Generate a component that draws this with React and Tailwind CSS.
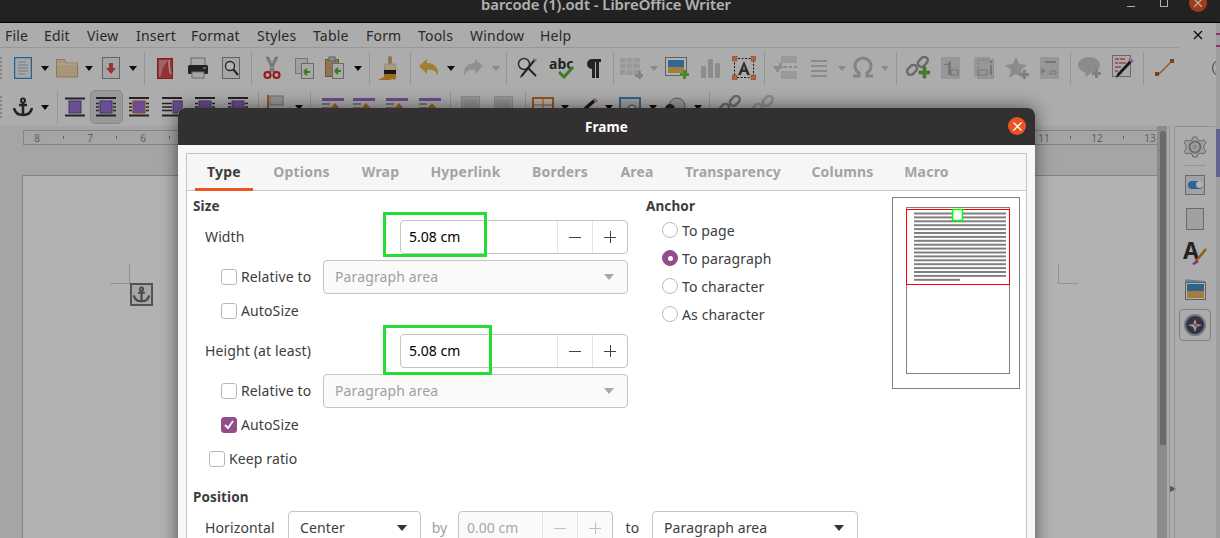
import React from "react";

const FONT = "font-['Noto_Sans','Liberation_Sans',sans-serif]";

const C = ({ w, children }) => (
  <div className={`${w} h-full flex items-center justify-center shrink-0`}>{children}</div>
);
const Sep = ({ w }) => (
  <div className={`${w} h-full flex items-center justify-center shrink-0`}>
    <div className="w-px h-[33px] bg-[#d6d6d6]" />
  </div>
);
const D = ({ w, off }) => (
  <div className={`${w} h-full flex items-center justify-center shrink-0`}>
    <svg width="8" height="5"><path d="M0 0h8L4 5z" fill={off ? "#c4c4c4" : "#111"} /></svg>
  </div>
);
const S = ({ w = 24, h = 24, children }) => <svg width={w} height={h} viewBox={`0 0 ${w} ${h}`} fill="none">{children}</svg>;

const NewDoc = () => (<S w={18} h={22}><rect x=".5" y=".5" width="17" height="21" fill="#eaf2f8" stroke="#3f8cc4" strokeWidth="1.5"/><path d="M4 5h8M4 8h10M4 11h10M4 14h10M4 17h7" stroke="#9fb0bc"/></S>);
const Folder = () => (<S w={22} h={20}><path d="M.5 5V1.5h8l2 3.5h11v14H.5z" fill="#f0d9ae" stroke="#c9ab7b"/><path d="M1 6h20" stroke="#fff2d5"/></S>);
const Save = () => (<S w={18} h={22}><rect x=".5" y=".5" width="17" height="21" fill="#ececec" stroke="#8f8f8f"/><path d="M7 6h4v5h3l-5 6-5-6h3z" fill="#e04848" /></S>);
const Pdf = () => (<S w={16} h={21}><rect x=".5" y=".5" width="15" height="20" fill="#d4484c" stroke="#a83034"/><path d="M12 2C7 6 5 11 4 18l-2 1V2z" fill="#e98e8e"/><path d="M12 2c0 5 0 10 2 14" stroke="#f3c5c5" strokeWidth="1.600"/></S>);
const Printer = () => (<S w={22} h={22}><rect x="4" y="1" width="14" height="8" fill="#f2f2f2" stroke="#999"/><rect x="1" y="8" width="20" height="9" rx="1.5" fill="#333"/><rect x="16" y="10" width="3" height="2" fill="#35a8e0"/><rect x="5" y="15" width="12" height="6" fill="#eee" stroke="#999"/></S>);
const Preview = () => (<S w={18} h={22}><rect x=".5" y=".5" width="17" height="21" fill="#ececec" stroke="#8f8f8f"/><circle cx="8" cy="9" r="4.5" fill="#fff" stroke="#333" strokeWidth="1.3"/><path d="M11 12l5 6" stroke="#333" strokeWidth="2"/></S>);
const Cut = () => (<S w={18} h={24}><path d="M3 1l1 2 6 13h2L6 1zM15 1l-1 2-6 13H6l6-15z" fill="#b4b4b4" stroke="#8a8a8a" strokeWidth=".5"/><circle cx="4.5" cy="19" r="3" stroke="#d22" strokeWidth="2.2"/><circle cx="13.5" cy="19" r="3" stroke="#d22" strokeWidth="2.2"/></S>);
const Copy = () => (<S w={20} h={22}><rect x=".5" y="1.5" width="12" height="15" fill="#e6e6e6" stroke="#aaa"/><rect x="6.5" y="6.5" width="12" height="15" fill="#f3f3f3" stroke="#999"/><path d="M15 15H9m0 0l3-3m-3 3l3 3" stroke="#5cad2e" strokeWidth="2.2"/></S>);
const Paste = () => (<S w={20} h={24}><rect x=".5" y="3.5" width="13" height="17" fill="#d0a870" stroke="#a27c48"/><rect x="4" y="1" width="6" height="4" fill="#ccc" stroke="#888"/><rect x="7.5" y="7.5" width="11" height="15" fill="#f3f3f3" stroke="#999"/><path d="M16 15h-6m0 0l3-3m-3 3l3 3" stroke="#5cad2e" strokeWidth="2.2"/></S>);
const Brush = () => (<S w={22} h={25}><rect x="11" y="0" width="4" height="8" rx="2" fill="#cfa873"/><path d="M8 8h10l1 6H7z" fill="#efe2bb" stroke="#b89c66" strokeWidth=".5"/><rect x="7" y="14" width="12" height="4" fill="#222"/><path d="M7 18h12v3l-1 3-3-1-2 1H1l4-2 2-1z" fill="#e29a2f"/></S>);
const Undo = ({ c = "#e8b84a" }) => (<S w={22} h={20}><path d="M1 8l8-7v4c7 0 12 4 11 13-2-5-5-7-11-6v4z" fill={c}/></S>);
const Find = () => (<S w={24} h={24}><circle cx="8" cy="8" r="5.5" fill="#fff" stroke="#444" strokeWidth="1.5"/><path d="M12 12l8 8" stroke="#333" strokeWidth="2"/><path d="M20 4L7 20l-3 2 1-3L18 3z" fill="#333"/><path d="M18 2l3 2-1 2-3-2z" fill="#d68ac8"/></S>);
const Abc = () => (<div className="relative w-[24px] h-[24px] leading-none"><span className="absolute left-0 top-[1px] font-['Noto_Sans'] font-bold text-[14px] text-[#333]">abc</span><svg className="absolute left-[9px] top-[9px]" width="16" height="14"><path d="M1 7l5 5 9-10" stroke="#56b13a" strokeWidth="3" fill="none"/></svg></div>);
const Pilcrow = () => (<S w={16} h={20}><path d="M6 1h9v3h-2v16h-3V4H9v16H6v-9a5 5 0 010-10z" fill="#333"/></S>);
const Table = () => (<S w={24} h={22}><rect x="1" y="1" width="20" height="17" fill="#dcdcdc"/><path d="M1 6h20M1 12h20M7 1v17M14 1v17" stroke="#f5f5f5"/><path d="M16 17h3v-3h3v3h2v3h-2v2h-3v-2h-3z" fill="#bcbcbc"/></S>);
const Image = () => (<S w={24} h={22}><rect x=".5" y=".5" width="21" height="18" fill="#fff" stroke="#8a8a8a"/><rect x="3" y="3" width="16" height="13" fill="#4596d4"/><path d="M3 10h16v6H3z" fill="#e9b458"/><path d="M15 16h3v-3h3v3h3v3h-3v3h-3v-3h-3z" fill="#6cc43c"/></S>);
const Chart = () => (<S w={20} h={20}><rect x="0" y="8" width="5" height="12" rx="1.5" fill="#c9c9c9"/><rect x="7" y="1" width="5" height="19" rx="1.5" fill="#c9c9c9"/><rect x="14" y="5" width="5" height="15" rx="1.5" fill="#c9c9c9"/></S>);
const TextBox = () => (<S w={24} h={24}><rect x="2.5" y="2.5" width="19" height="19" stroke="#222" strokeDasharray="2 1.5"/><path d="M12 5l6 14h-3l-1-3H10l-1 3H6zM11 13.500h2l-1-3.500z" fill="#444" fillRule="evenodd"/>{[[0,0],[19,0],[0,19],[19,19]].map(([x,y],i)=><rect key={i} x={x} y={y} width="5" height="5" fill="#ec9660" stroke="#b86a32" strokeWidth=".5"/>)}</S>);
const Rows = () => (<S w={24} h={24}><rect x="7" y="0" width="16" height="7" fill="#dcdcdc"/><rect x="7" y="15" width="16" height="8" fill="#dcdcdc"/><path d="M0 10h5v-3h3v3h0v3H5v3H2v-3H0z" fill="#c8c8c8"/><path d="M9 11h4M15 11h3M20 11h3" stroke="#c4c4c4" strokeWidth="2"/></S>);
const Align = () => (<S w={18} h={20}><path d="M1 3h16M1 8h16M1 13h16M1 18h16" stroke="#c8c8c8" strokeWidth="2"/></S>);
const Omega = () => (<S w={22} h={24}><path d="M1 20h6v-3c-3-2-4-4-4-7 0-5 4-8 8-8s8 3 8 8c0 3-1 5-4 7v3h6" stroke="#bcbcbc" strokeWidth="3"/></S>);
const Link = ({ plus = true, c = "#999" }) => (<S w={24} h={24}><rect x="11" y="1" width="11" height="7" rx="3.500" transform="rotate(-45 14 8) translate(1 4)" stroke={c} strokeWidth="2.500"/><rect x="2" y="11" width="11" height="7" rx="3.500" transform="rotate(-45 6 16)" stroke={c} strokeWidth="2.500"/>{plus && <path d="M13 15h4v-4h3v4h4v3h-4v4h-3v-4h-4z" fill="#6cb33c" stroke="#4c8a28" strokeWidth=".5"/>}</S>);
const FootGlyph = () => (<path d="M3 7h3l3-3v0h1v14H7V8H3z" fill="#aaa"/>);
const Foot = () => (<S w={20} h={22}><rect x="0" y="0" width="19" height="22" fill="#d8d8d8"/><FootGlyph /><rect x="10" y="13" width="7" height="5" fill="#d8d8d8" stroke="#aaa"/></S>);
const DocBox = () => (<S w={20} h={22}><rect x=".5" y=".5" width="18" height="21" fill="#d8d8d8" stroke="#c4c4c4"/><path d="M3 5h13M3 8h13M3 11h13M3 14h13" stroke="#bcbcbc"/></S>);
const Foot2 = () => (<S w={20} h={22}><rect x="0" y="0" width="16" height="20" fill="#d8d8d8"/><rect x="4" y="3" width="16" height="19" fill="#d8d8d8" stroke="#c0c0c0"/><rect x="4" y="13" width="9" height="5" stroke="#aaa"/><rect x="16" y="4" width="2" height="2" fill="#aaa"/><rect x="16" y="8" width="2" height="10" fill="#aaa"/></S>);
const Star = () => (<S w={24} h={24}><path d="M11 1l3 7 8 1-6 5 2 8-7-4-7 4 2-8-6-5 8-1z" fill="#c8c8c8"/><path d="M15 17h3v-3h3v3h3v3h-3v3h-3v-3h-3z" fill="#b8b8b8"/></S>);
const XRef = () => (<S w={20} h={22}><rect x="0" y="0" width="19" height="22" fill="#d8d8d8"/><path d="M5 5h11" stroke="#aaa" strokeWidth="2"/><path d="M1 11l5 3-5 3z" fill="#b0b0b0"/><rect x="10" y="14" width="6" height="3" stroke="#aaa"/></S>);
const Comment = () => (<S w={24} h={22}><ellipse cx="11" cy="8" rx="11" ry="8" fill="#c8c8c8"/><path d="M7 14l1 6 6-5z" fill="#c8c8c8"/><path d="M14 15h3v-3h3v3h3v3h-3v3h-3v-3h-3z" fill="#b8b8b8"/></S>);
const Track = () => (<S w={24} h={26}><rect x=".5" y=".5" width="18" height="21" fill="#f2f2f2" stroke="#999"/><path d="M3 4h4M8 4h5M3 8h3M7 8h7M3 12h6M3 16h3" stroke="#b62020" strokeWidth="1.2"/><path d="M21 6L8 20l-4 3 1-4L18 5z" fill="#222"/><path d="M18 3l4 3-2 2-4-3z" fill="#dc8fd6"/></S>);
const Line = () => (<S w={20} h={20}><path d="M3 17L17 3" stroke="#d3741f" strokeWidth="1.2"/><rect x="0" y="14" width="4" height="4" fill="#bf5c10"/><rect x="15" y="1" width="4" height="4" fill="#bf5c10"/></S>);
const More = () => (<S w={18} h={18}><circle cx="9" cy="9" r="7.500" stroke="#7c7c7c" strokeWidth="1.200"/><path d="M5 5l4 4-4 4M9 5l4 4-4 4" stroke="#8a8a8a" strokeWidth="1.400"/></S>);

const Anchor = ({ c = "#333", s = 20 }) => (<svg width={s} height={s} viewBox="0 0 20 20" fill="none"><circle cx="10" cy="3.500" r="2" stroke={c} strokeWidth="2"/><path d="M10 5v13M6 8h8" stroke={c} strokeWidth="2.500"/><path d="M1 11c1 5 5 7 9 7s8-2 9-7" stroke={c} strokeWidth="2.500"/></svg>);
const Wrap = ({ kind = 0, border }) => (
  <S w={22} h={20}>
    {kind === 0 ? (<><path d="M1 1.500h20M1 18.500h20" stroke="#333" strokeWidth="2"/></>) : (<><path d="M1 1h20M1 4h0M1 18.500h20" stroke="#333" strokeWidth="2"/>{kind===1 && <path d="M1 6.500h3M1 10h3M1 13.500h3M18 6.500h3M18 10h3M18 13.500h3" stroke="#333" strokeWidth="1.500"/>}{kind===2 && <path d="M1 6.500h10M1 10h10M1 13.500h10" stroke="#333" strokeWidth="1.500"/>}</>)}
    <rect x={kind===2?12:5} y="4" width="12" height="12" fill="#9a6fd0" stroke={border ? "#d0602c" : "#6a45a0"} strokeWidth="1"/>
  </S>
);
const Flag = () => (<S w={22} h={26}><rect x="2" y="1" width="2" height="24" fill="#d97a20"/><rect x="5" y="2" width="13" height="9" fill="#d8d8d8" stroke="#999"/></S>);
const ParaUp = () => (<S w={24} h={20}><rect x="1" y="1" width="22" height="3" fill="#9a6fd0"/><path d="M1 7h8M1 11h8" stroke="#aaa" strokeWidth="2"/><path d="M14 6l6 7H8z" fill="#e0883c"/></S>);
const OrangeFrame = () => (<S w={22} h={20}><rect x="1" y="1" width="20" height="18" fill="#fff" stroke="#d97a20" strokeWidth="2"/><path d="M11 1v18M1 8h20" stroke="#d97a20" strokeWidth="1"/></S>);
const PenSmall = () => (<S w={24} h={20}><path d="M20 3L3 18" stroke="#222" strokeWidth="3.500"/><path d="M19 2l3 3" stroke="#dc8fd6" strokeWidth="3"/></S>);
const BlueFrame = () => (<S w={22} h={20}><rect x="1" y="1" width="20" height="18" fill="#e6e6e6" stroke="#4a8fc4" strokeWidth="2"/><circle cx="13" cy="12" r="4" fill="#fff" stroke="#555"/></S>);
const Reel = () => (<S w={22} h={20}><circle cx="13" cy="9" r="8" fill="#d8d8d8" stroke="#888"/><circle cx="6" cy="12" r="5" fill="#333"/></S>);

function Grip({ h = "h-[24px]" }) {
  return <div className={`w-[2px] ${h} mt-[1px] bg-[repeating-linear-gradient(to_bottom,#bdbdbd_0,#bdbdbd_2px,transparent_2px,transparent_4px)] shrink-0`} />;
}

function Toolbar1() {
  return (
    <div className="h-[40px] flex items-center shrink-0">
      <Grip />
      <div className="w-[6px] shrink-0" />
      <C w="w-[30px]"><NewDoc /></C><D w="w-[14px]" />
      <C w="w-[30px]"><Folder /></C><D w="w-[14px]" />
      <C w="w-[30px]"><Save /></C><D w="w-[14px]" />
      <Sep w="w-[9px]" />
      <C w="w-[32px]"><Pdf /></C><C w="w-[34px]"><Printer /></C><C w="w-[32px]"><Preview /></C>
      <Sep w="w-[8px]" />
      <C w="w-[34px]"><Cut /></C><C w="w-[32px]"><Copy /></C><C w="w-[28px]"><Paste /></C><D w="w-[18px]" />
      <Sep w="w-[4px]" />
      <C w="w-[34px]"><Brush /></C>
      <Sep w="w-[10px]" />
      <C w="w-[28px]"><Undo /></C><D w="w-[16px]" />
      <C w="w-[28px]"><div className="-scale-x-100 flex"><Undo c="#cfcfcf" /></div></C><D w="w-[18px]" off />
      <Sep w="w-[2px]" />
      <C w="w-[42px]"><Find /></C><C w="w-[24px]"><Abc /></C><div className="w-[5px] shrink-0" /><C w="w-[32px]"><Pilcrow /></C>
      <Sep w="w-[6px]" />
      <C w="w-[30px]"><Table /></C><D w="w-[16px]" off />
      <C w="w-[30px]"><Image /></C><C w="w-[38px]"><Chart /></C><C w="w-[28px]"><TextBox /></C>
      <Sep w="w-[12px]" />
      <C w="w-[32px]"><Rows /></C><C w="w-[36px]"><div className="-ml-[2px] flex"><Align /></div></C><D w="w-[8px]" off />
      <div className="w-[2px] shrink-0" />
      <C w="w-[30px]"><Omega /></C><D w="w-[14px]" off />
      <Sep w="w-[8px]" />
      <C w="w-[36px]"><Link /></C><C w="w-[30px]"><Foot /></C><C w="w-[36px]"><Foot2 /></C><C w="w-[30px]"><Star /></C><C w="w-[36px]"><XRef /></C>
      <Sep w="w-[4px]" />
      <C w="w-[36px]"><Comment /></C><C w="w-[32px]"><Track /></C>
      <Sep w="w-[6px]" />
      <C w="w-[38px]"><Line /></C>
      <div className="w-[27px] shrink-0" />
      <C w="w-[18px]"><More /></C>
    </div>
  );
}

function Toolbar2() {
  return (
    <div className="h-[38px] flex items-center shrink-0">
      <Grip />
      <div className="w-[6px] shrink-0" />
      <C w="w-[30px]"><Anchor /></C><D w="w-[14px]" />
      <Sep w="w-[10px]" />
      <C w="w-[26px]"><Wrap /></C>
      <C w="w-[36px]"><div className="w-[33px] h-[34px] rounded-[5px] bg-[#dcdcdc] border border-[#c4c4c4] flex items-center justify-center"><Wrap kind={1} /></div></C>
      <C w="w-[30px]"><Wrap kind={1} border /></C>
      <C w="w-[36px]"><Wrap kind={2} /></C>
      <C w="w-[30px]"><Wrap kind={1} /></C>
      <C w="w-[36px]"><Wrap kind={1} /></C>
      <Sep w="w-[4px]" />
      <C w="w-[32px]"><Flag /></C><D w="w-[14px]" />
      <Sep w="w-[8px]" />
      <C w="w-[38px]"><ParaUp /></C><C w="w-[24px]"><ParaUp /></C><C w="w-[42px]"><ParaUp /></C><C w="w-[24px]"><ParaUp /></C>
      <Sep w="w-[16px]" />
      <C w="w-[26px]"><DocBox /></C><C w="w-[40px]"><DocBox /></C>
      <Sep w="w-[2px]" />
      <C w="w-[34px]"><OrangeFrame /></C><D w="w-[10px]" />
      <C w="w-[34px]"><PenSmall /></C><D w="w-[10px]" />
      <C w="w-[32px]"><BlueFrame /></C><D w="w-[14px]" />
      <C w="w-[30px]"><Reel /></C><D w="w-[16px]" />
      <Sep w="w-[6px]" />
      <C w="w-[36px]"><Link plus={false} /></C><C w="w-[30px]"><Link plus={false} c="#c8c8c8" /></C>
    </div>
  );
}

const MENU = [["File","w-[39px]"],["Edit","w-[43px]"],["View","w-[49px]"],["Insert","w-[55px]"],["Format","w-[66px]"],["Styles","w-[56px]"],["Table","w-[53px]"],["Form","w-[52px]"],["Tools","w-[52px]"],["Window","w-[70px]"],["Help","w-[60px]"]];

function Ruler() {
  const nums = [8,7,6,"","","","","","","","","","","","","","","","",11,12,13];
  return (
    <div className="ml-[23px] mt-[4px] h-[15px] border-y border-l border-[#bcbcbc] flex items-center pl-[6px] overflow-hidden shrink-0">
      {nums.map((n, i) => (
        <React.Fragment key={i}>
          <span className="w-[14px] text-center text-[10px] leading-none text-[#8a8a8a] shrink-0">{n}</span>
          {i < nums.length - 1 && <div className="w-[39px] flex justify-center shrink-0"><div className="w-px h-[3px] bg-[#888]" /></div>}
        </React.Fragment>
      ))}
    </div>
  );
}

function Sidebar() {
  return (
    <div className="w-[41px] border-l border-[#d0d0d0] border-t flex flex-col items-center pt-[7px] shrink-0">
      <svg width="26" height="26" viewBox="0 0 26 26" fill="none"><path d="M13 3l2 0 1 3 3 1 3-1 2 3-2 2v4l2 2-2 3-3-1-3 1-1 3h-4l-1-3-3-1-3 1-2-3 2-2v-4L2 9l2-3 3 1 3-1 1-3z" fill="#e6e6e6" stroke="#999"/><circle cx="13" cy="13" r="5.500" stroke="#999" strokeWidth="2"/><circle cx="13" cy="13" r="2.500" fill="#ccc"/></svg>
      <div className="w-[22px] h-px bg-[#d4d4d4] mt-[5px]" />
      <div className="mt-[9px] w-[20px] h-[20px] bg-[#e8e8e8] border border-[#999] flex items-center justify-center">
        <div className="w-[15px] h-[8px] rounded-full bg-[#3f8fe0] flex justify-end"><div className="w-[7px] h-[7px] rounded-full bg-white" /></div>
      </div>
      <div className="mt-[13px] w-[18px] h-[22px] bg-[#e6e6e6] border border-[#999]" />
      <div className="mt-[11px] relative w-[24px] h-[26px]">
        <span className="absolute left-0 top-[-5px] font-['Noto_Sans'] font-bold text-[23px] leading-[28px] text-[#333]">A</span>
        <svg className="absolute left-[8px] top-[7px]" width="16" height="18"><path d="M15 1L5 13" stroke="#d97a20" strokeWidth="2.500"/><path d="M5 12l3 2-5 3-2-1z" fill="#c04cc0"/></svg>
      </div>
      <div className="mt-[12px]"><svg width="24" height="22"><rect x="2" y="1" width="20" height="5" fill="#90b8d8" transform="rotate(5 12 4)"/><rect x="2.500" y="3.500" width="20" height="17" fill="#fff" stroke="#888"/><rect x="4" y="5" width="17" height="7" fill="#3f8fc4"/><rect x="4" y="12" width="17" height="7" fill="#e9b458"/></svg></div>
      <div className="mt-[8px] w-[32px] h-[32px] border border-[#b8b8b8] rounded-[4px] flex items-center justify-center">
        <svg width="22" height="22"><circle cx="11" cy="11" r="10" fill="#3d4a6a" stroke="#aaa" strokeWidth="2"/><path d="M11 5l2 5 5 1-5 2-2 5-2-5-5-2 5-1z" fill="#ddd"/><path d="M5 6l12 10M16 3l-4 8" stroke="#c22" /></svg>
      </div>
    </div>
  );
}

function Window() {
  return (
    <div className="flex flex-col w-[1220px] h-[538px]">
      <div className="h-[23px] bg-[#333132] border-b border-black flex shrink-0 relative overflow-hidden">
        <div className="absolute left-0 right-0 top-[-6px] text-center text-[14.800px] leading-[20px] font-semibold text-[#fff] pr-[8px]">barcode (1).odt - LibreOffice Writer</div>
        <div className="absolute left-[1127px] top-[6px] w-[8px] h-px bg-white" />
        <div className="absolute left-[1160px] top-[-1px] w-[8px] h-[8px] border border-white" />
        <div className="absolute left-[1189px] top-[-6px] w-[18px] h-[18px] rounded-full bg-[#e95420] flex items-center justify-center text-white">
          <svg width="8" height="8"><path d="M0 0l8 8M8 0L0 8" stroke="#fff" strokeWidth="1.300"/></svg>
        </div>
      </div>
      <div className="flex flex-1 min-h-0">
        <div className="flex-1 min-w-0 bg-[#f6f6f6] flex flex-col">
          <div className="h-[25px] flex items-center shrink-0">
            <div className="flex flex-1 h-full items-center border-b border-[#dcdcdc] pl-[5px]">
              {MENU.map(([m, w]) => <span key={m} className={`${w} text-[14px] text-[#3c3c3c] tracking-[0.2px]`}>{m}</span>)}
            </div>
            <div className="w-[37px] h-full flex items-center justify-center pb-[2px]">
              <svg width="10" height="10"><path d="M1 1l8 8M9 1l-8 8" stroke="#111" strokeWidth="1.300"/></svg>
            </div>
          </div>
          <Toolbar1 />
          <Toolbar2 />
          <div className="flex flex-1 min-h-0">
            <div className="w-[1157px] bg-[#ececec] flex flex-col min-h-0 shrink-0">
              <Ruler />
              <div className="h-[30px] shrink-0" />
              <div className="flex-1 ml-[22px] bg-white border-t border-l border-[#bdbdbd] flex justify-between pl-[87px] pr-[79px] pt-[88px]">
                <div className="flex items-start">
                  <div className="w-[20px] h-[20px] border-r border-b border-[#d0d0d0]" />
                  <div className="mt-[19px] w-[23px] h-[23px] border-2 border-[#777] bg-[#eee] flex items-center justify-center"><Anchor c="#666" s={17} /></div>
                </div>
                <div className="w-[20px] h-[20px] border-l border-b border-[#d0d0d0]" />
              </div>
            </div>
            <div className="w-[10px] bg-[#c8c8c8] pl-[3px] pt-[5px] shrink-0">
              <div className="w-[6px] h-[314px] rounded-t-[3px] bg-[#999]" />
            </div>
            <div className="w-[2px] shrink-0" />
            <div className="w-[5px] border-l border-[#d0d0d0] flex items-end shrink-0 h-full pb-[46px]">
              <div className="text-[8px] leading-none text-[#777]">▶</div>
            </div>
            <Sidebar />
          </div>
        </div>
        <div className="w-[4px] bg-[#e2e2e2] shrink-0 flex flex-col">
          <div className="mt-[10px] h-[2px] bg-[#d040a0]" />
          <div className="mt-[10px] h-[2px] bg-[#d040a0]" />
          <div className="mt-[82px] h-[48px] bg-[#8e8ed0]" />
        </div>
      </div>
    </div>
  );
}

const Check = ({ on }) => (
  <div className={`w-[16px] h-[16px] rounded-[3px] border flex items-center justify-center shrink-0 ${on ? "bg-[#924d8b] border-[#924d8b]" : "bg-white border-[#b9b9b9]"}`}>
    {on && <svg width="12" height="12"><path d="M2 6l3 3 5-7" stroke="#fff" strokeWidth="1.800" fill="none"/></svg>}
  </div>
);
const Radio = ({ on, label }) => (
  <div className="flex items-center h-[28px] pl-[16px]">
    <div className={`w-[16px] h-[16px] rounded-full border flex items-center justify-center shrink-0 ${on ? "bg-[#924d8b] border-[#924d8b]" : "bg-white border-[#b9b9b9]"}`}>
      {on && <div className="w-[5px] h-[5px] rounded-full bg-white" />}
    </div>
    <span className="ml-[4px] text-[#3d3d3d]">{label}</span>
  </div>
);
const Spin = ({ value, cls, disabled }) => (
  <div className={`${cls} h-[34px] rounded-[4px] border border-[#c4c4c4] flex items-center shrink-0 ${disabled ? "bg-[#fafafa]" : "bg-white"}`}>
    <div className={`flex-1 pl-[8px] pb-[2px] tracking-[0px] ${disabled ? "text-[#a8a8a8]" : "text-black"}`}>{value}</div>
    <div className="w-[35px] h-full border-l border-[#e4e4e4] flex items-center justify-center">
      <svg width="12" height="12"><path d="M0 6.500h12" stroke={disabled ? "#c0c0c0" : "#444"}/></svg>
    </div>
    <div className="w-[35px] h-full border-l border-[#e4e4e4] flex items-center justify-center">
      <svg width="12" height="12"><path d="M0 6.500h12M6.500 0v12" stroke={disabled ? "#c0c0c0" : "#444"}/></svg>
    </div>
  </div>
);
const Select = ({ value, cls, disabled }) => (
  <div className={`${cls} h-[34px] rounded-[4px] border border-[#c4c4c4] flex items-center justify-between pl-[11px] pr-[13px] shrink-0 ${disabled ? "bg-[#fafafa] text-[#a0a0a0]" : "bg-white text-[#3d3d3d]"}`}>
    <span className="pb-[2px]">{value}</span>
    <svg width="10" height="6"><path d="M0 0h10L5 6z" fill={disabled ? "#a8a8a8" : "#333"}/></svg>
  </div>
);
const CheckRow = ({ on, label, cls }) => (
  <div className={`flex items-center ${cls}`}><Check on={on} /><span className="ml-[4px] pb-[2px] text-[#3d3d3d]">{label}</span></div>
);

const TABS = [["Type","w-[58px]"],["Options","w-[89px] ml-[4px]"],["Wrap","w-[69px]"],["Hyperlink","w-[101px]"],["Borders","w-[88px]"],["Area","w-[66px]"],["Transparency","w-[126px]"],["Columns","w-[93px]"],["Macro","w-[75px]"]];

function Preview2() {
  const ys = Array.from({ length: 18 }, (_, i) => 5.500 + i * 3.900);
  return (
    <div className="w-[128px] h-[192px] border border-[#808080] bg-white shrink-0 mt-[6px] pl-[13px] pt-[9px]">
      <svg width="105" height="168" viewBox="0 0 105 168">
        <rect x=".5" y=".5" width="103" height="166" fill="#fff" stroke="#808080"/>
        {ys.map((y, i) => <rect key={i} x="8" y={y} width={i === 17 ? 46 : 92} height="2" fill="#808080" />)}
        <rect x=".5" y="2.500" width="103" height="75" fill="none" stroke="#f00"/>
        <rect x="46.500" y="2.500" width="10" height="11" fill="#fff" stroke="#0f0" strokeWidth="1.500"/>
      </svg>
    </div>
  );
}

function Dialog() {
  return (
    <div className={`absolute left-[178px] top-[108px] w-[857px] h-[460px] rounded-t-[7px] bg-[#f7f7f7] shadow-[0_0_18px_rgba(0,0,0,0.55)] flex flex-col text-[14px] tracking-[0.12px] ${FONT}`}>
      <div className="h-[37px] rounded-t-[7px] bg-[#323030] flex items-center relative shrink-0">
        <div className="w-full text-center font-bold text-white text-[13.500px] pt-[1px]">Frame</div>
        <div className="absolute right-[9px] top-[9px] w-[18px] h-[18px] rounded-full bg-[#e95420] flex items-center justify-center">
          <svg width="9" height="9"><path d="M.5.5l8 8M8.500.5l-8 8" stroke="#fff" strokeWidth="1.300"/></svg>
        </div>
      </div>
      <div className="mx-[8px] mt-[8px] flex-1 border border-[#c4c4c4] bg-white flex flex-col min-h-0">
        <div className="h-[37px] border-b border-[#c8c8c8] bg-[#f6f6f6] flex pl-[8px] shrink-0">
          {TABS.map(([t, w], i) => (
            <div key={t} className={`${w} h-[37px] flex items-center justify-center font-bold text-[14px] tracking-[0.2px] shrink-0 ${i === 0 ? "text-[#3d3d3d] border-b-[3px] border-[#e95420] pt-[1px]" : "text-[#a3a3a3] pb-[3px]"}`}>{t}</div>
          ))}
        </div>
        <div className="flex pl-[6px] shrink-0">
          <div className="w-[435px] shrink-0 flex flex-col relative">
            <div className="h-[20px] mt-[5px] font-bold text-[#3d3d3d] flex items-center text-[13.500px]">Size</div>
            <div className="mt-[4px] flex items-center">
              <span className="w-[207px] pl-[12px] pb-[2px] text-[#3d3d3d]">Width</span>
              <Spin value="5.08 cm" cls="w-[228px]" />
            </div>
            <div className="mt-[6px] flex items-center pl-[28px]">
              <Check /><span className="ml-[4px] pb-[2px] w-[82px] text-[#3d3d3d]">Relative to</span>
              <Select value="Paragraph area" disabled cls="w-[305px]" />
            </div>
            <CheckRow label="AutoSize" cls="mt-[5px] h-[24px] pl-[28px]" />
            <div className="mt-[11px] flex items-center">
              <span className="w-[207px] pl-[12px] pb-[2px] text-[#3d3d3d]">Height (at least)</span>
              <Spin value="5.08 cm" cls="w-[228px]" />
            </div>
            <div className="mt-[6px] flex items-center pl-[28px]">
              <Check /><span className="ml-[4px] pb-[2px] w-[82px] text-[#3d3d3d]">Relative to</span>
              <Select value="Paragraph area" disabled cls="w-[305px]" />
            </div>
            <CheckRow on label="AutoSize" cls="mt-[5px] h-[24px] pl-[28px]" />
            <CheckRow label="Keep ratio" cls="mt-[10px] h-[24px] pl-[16px]" />
            <div className="absolute left-[190px] top-[21px] w-[104px] h-[45px] border-[3px] border-[#22dd33]" />
            <div className="absolute left-[190px] top-[134px] w-[109px] h-[50px] border-[3px] border-[#22dd33]" />
          </div>
          <div className="w-[246px] ml-[18px] shrink-0">
            <div className="h-[20px] mt-[5px] font-bold text-[#3d3d3d] flex items-center text-[13.500px]">Anchor</div>
            <div>
              <Radio label="To page" />
              <Radio on label="To paragraph" />
              <Radio label="To character" />
              <Radio label="As character" />
            </div>
          </div>
          <Preview2 />
        </div>
        <div className="pl-[6px] mt-[16px]">
          <div className="h-[20px] font-bold text-[#3d3d3d] flex items-center text-[13.500px]">Position</div>
          <div className="mt-[4px] flex items-center">
            <span className="w-[95px] pl-[12px] pb-[2px] text-[#3d3d3d]">Horizontal</span>
            <Select value="Center" cls="w-[133px]" />
            <span className="w-[37px] pb-[2px] text-center text-[#a0a0a0]">by</span>
            <Spin value="0.00 cm" disabled cls="w-[155px]" />
            <span className="w-[39px] pb-[2px] text-center text-[#3d3d3d]">to</span>
            <Select value="Paragraph area" cls="w-[206px]" />
          </div>
        </div>
      </div>
    </div>
  );
}

export default function App() {
  return (
    <div className={`relative w-[1220px] h-[538px] overflow-hidden ${FONT}`}>
      <Window />
      <div className="absolute inset-0 bg-black/30" />
      <Dialog />
    </div>
  );
}
